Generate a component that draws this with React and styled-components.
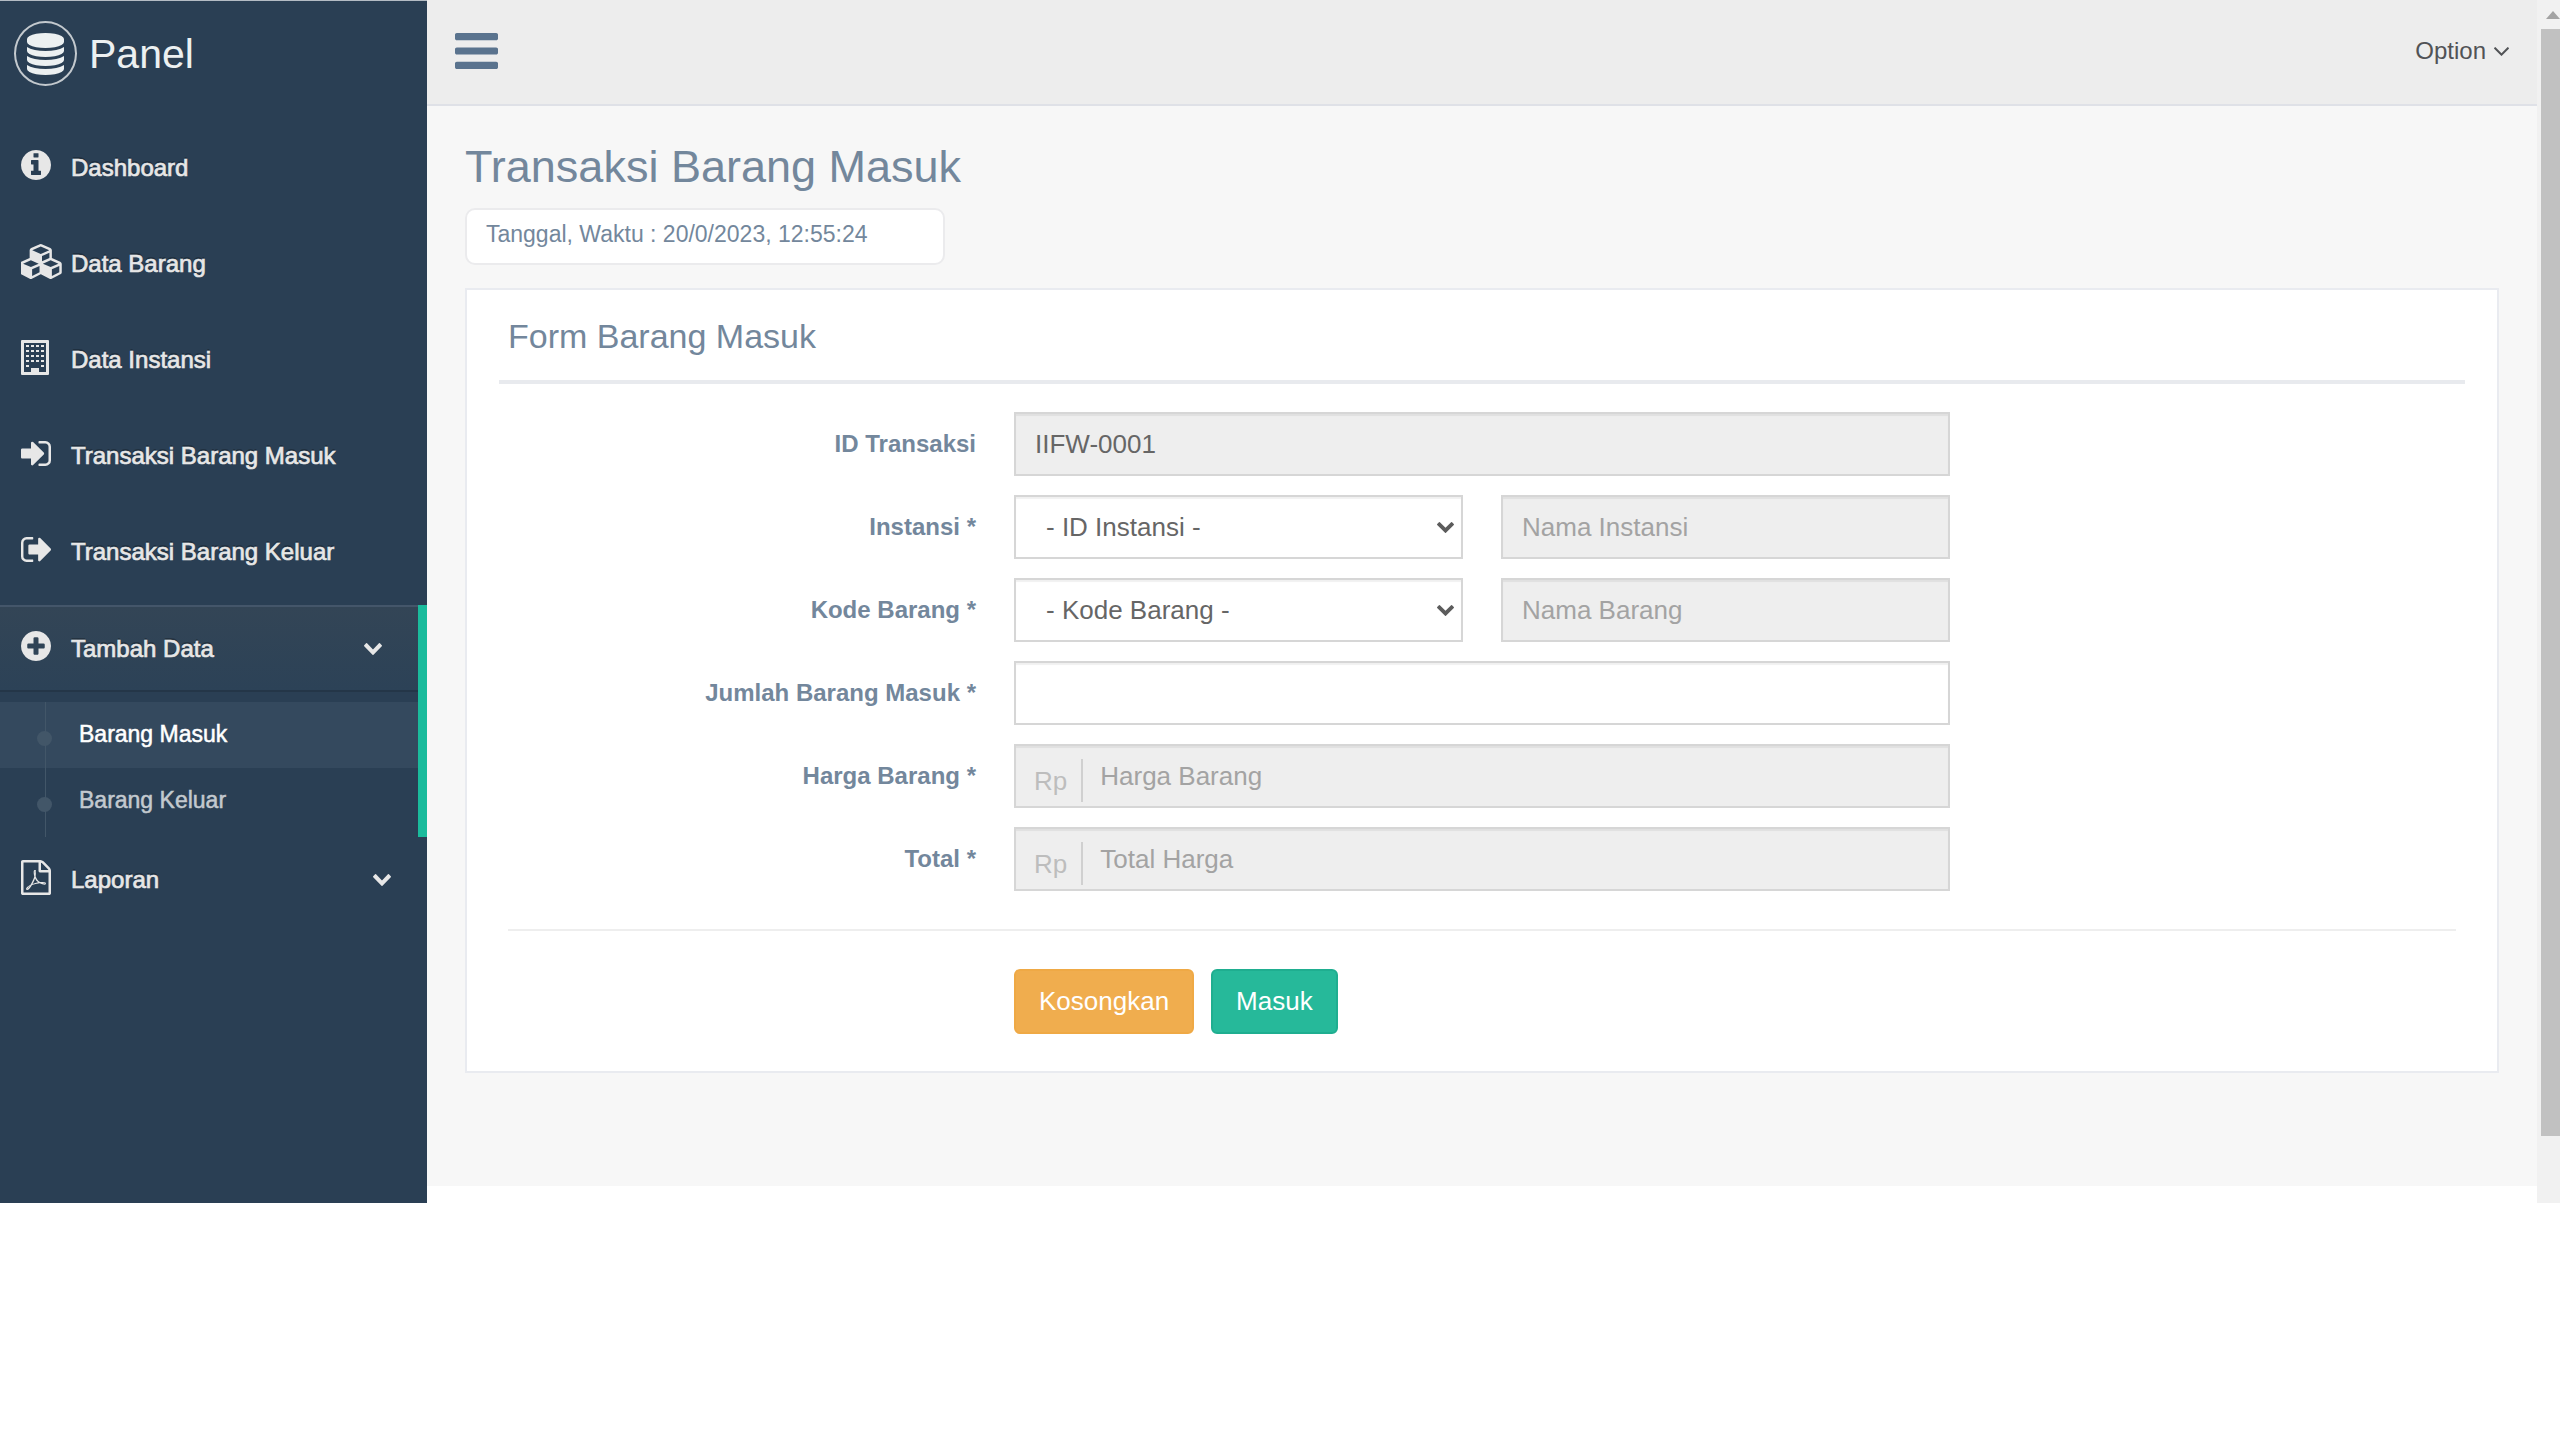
import React from "react";
import styled, { createGlobalStyle } from "styled-components";

const GlobalStyle = createGlobalStyle`
  *, *::before, *::after { box-sizing: border-box; }
  body {
    margin: 0;
    background: #fff;
    color: #73879c;
    font-family: "Liberation Sans", Arial, sans-serif;
    font-size: 24px;
    line-height: 36px;
  }
  button, input, select { font-family: inherit; margin: 0; }
  h1, h2, ul { margin: 0; padding: 0; font-weight: 400; }
  ul { list-style: none; }
  a { color: inherit; text-decoration: none; }
`;

const Svg = styled.svg`
  display: block;
  flex: none;
  width: ${(p) => p.$w}px;
  height: ${(p) => p.$h}px;
  fill: currentColor;
`;

const ICONS = {
  database: {
    box: "128 0 1536 1792",
    d: "M896 768q237 0 443-43t325-127v170q0 69-103 128t-280 93.5-385 34.5-385-34.5-280-93.5-103-128v-170q119 84 325 127t443 43zm0 768q237 0 443-43t325-127v170q0 69-103 128t-280 93.5-385 34.5-385-34.5-280-93.5-103-128v-170q119 84 325 127t443 43zm0-384q237 0 443-43t325-127v170q0 69-103 128t-280 93.5-385 34.5-385-34.5-280-93.5-103-128v-170q119 84 325 127t443 43zm0-1152q208 0 385 34.5t280 93.5 103 128v128q0 69-103 128t-280 93.5-385 34.5-385-34.5-280-93.5-103-128v-128q0-69 103-128t280-93.5 385-34.5z",
  },
  info: {
    box: "128 128 1536 1536",
    d: "M1152 1376v-160q0-14-9-23t-23-9h-96v-512q0-14-9-23t-23-9h-320q-14 0-23 9t-9 23v160q0 14 9 23t23 9h96v320h-96q-14 0-23 9t-9 23v160q0 14 9 23t23 9h448q14 0 23-9t9-23zm-128-896v-160q0-14-9-23t-23-9h-192q-14 0-23 9t-9 23v160q0 14 9 23t23 9h192q14 0 23-9t9-23zm640 416q0 209-103 385.5t-279.5 279.5-385.5 103-385.5-103-279.5-279.5-103-385.5 103-385.5 279.5-279.5 385.5-103 385.5 103 279.5 279.5 103 385.5z",
  },
  cubes: {
    box: "64 0 2176 1792",
    d: "M640 1632l384-192v-314l-384 164v342zm-64-454l404-173-404-173-404 173zm1088 454l384-192v-314l-384 164v342zm-64-454l404-173-404-173-404 173zm-448-293l384-165v-266l-384 164v267zm-64-379l441-189-441-189-441 189zm1088 518v416q0 36-19 67t-52 47l-448 224q-25 14-57 14t-57-14l-448-224q-5-2-7-4-2 2-7 4l-448 224q-25 14-57 14t-57-14l-448-224q-33-16-52-47t-19-67v-416q0-38 21.5-70t56.5-48l434-186v-400q0-38 21.5-70t56.5-48l448-192q23-10 50-10t50 10l448 192q35 16 56.5 48t21.5 70v400l434 186q36 16 57 48t21 70z",
  },
  building: {
    box: "0 0 28 35",
    d: "M1 0H27Q28 0 28 1V34Q28 35 27 35H1Q0 35 0 34V1Q0 0 1 0ZM3 3V32H10V28H18V32H25V3ZM5 5H8V7H5ZM10 5H13V7H10ZM15 5H18V7H15ZM20 5H23V7H20ZM5 10H8V12H5ZM10 10H13V12H10ZM15 10H18V12H15ZM20 10H23V12H20ZM5 15H8V17H5ZM10 15H13V17H10ZM15 15H18V17H15ZM20 15H23V17H20ZM5 20H8V22H5ZM10 20H13V22H10ZM15 20H18V22H15ZM20 20H23V22H20ZM5 25H8V27H5ZM20 25H23V27H20Z",
  },
  signIn: {
    box: "128 256 1536 1280",
    d: "M1312 896q0 26-19 45l-544 544q-19 19-45 19t-45-19-19-45v-288h-448q-26 0-45-19t-19-45v-384q0-26 19-45t45-19h448v-288q0-26 19-45t45-19 45 19l544 544q19 19 19 45zm352-352v704q0 119-84.5 203.5t-203.5 84.5h-320q-13 0-22.5-9.5t-9.5-22.5q0-4-1-20t-.5-26.5 3-23.5 10-19.5 20.5-6.5h320q66 0 113-47t47-113v-704q0-66-47-113t-113-47h-312l-11.5-1-11.5-3-8-5.5-7-9-2-13.5q0-4-1-20t-.5-26.5 3-23.5 10-19.5 20.5-6.5h320q119 0 203.5 84.5t84.5 203.5z",
  },
  signOut: {
    box: "64 256 1568 1280",
    d: "M704 1440q0 4 1 20t.5 26.5-3 23.5-10 19.5-20.5 6.5h-320q-119 0-203.5-84.5t-84.5-203.5v-704q0-119 84.5-203.5t203.5-84.5h320q13 0 22.5 9.5t9.5 22.5q0 4 1 20t.5 26.5-3 23.5-10 19.5-20.5 6.5h-320q-66 0-113 47t-47 113v704q0 66 47 113t113 47h312l11.5 1 11.5 3 8 5.5 7 9 2 13.5zm928-544q0 26-19 45l-544 544q-19 19-45 19t-45-19-19-45v-288h-448q-26 0-45-19t-19-45v-384q0-26 19-45t45-19h448v-288q0-26 19-45t45-19 45 19l544 544q19 19 19 45z",
  },
  plus: {
    box: "128 128 1536 1536",
    d: "M1344 960v-128q0-26-19-45t-45-19h-256v-256q0-26-19-45t-45-19h-128q-26 0-45 19t-19 45v256h-256q-26 0-45 19t-19 45v128q0 26 19 45t45 19h256v256q0 26 19 45t45 19h128q26 0 45-19t19-45v-256h256q26 0 45-19t19-45zm320-64q0 209-103 385.5t-279.5 279.5-385.5 103-385.5-103-279.5-279.5-103-385.5 103-385.5 279.5-279.5 385.5-103 385.5 103 279.5 279.5 103 385.5z",
  },
  pdf: {
    box: "128 0 1536 1792",
    d: "M1596 380q28 28 48 76t20 88v1152q0 40-28 68t-68 28h-1344q-40 0-68-28t-28-68v-1600q0-40 28-68t68-28h896q40 0 88 20t76 48zm-444-244v376h376q-10-29-22-41l-313-313q-12-12-41-22zm384 1528v-1024h-416q-40 0-68-28t-28-68v-416h-768v1536h1280zm-514-593q33 26 84 56 59-7 117-7 147 0 177 49 16 22 2 52 0 1-1 2l-2 2v1q-6 38-71 38-48 0-115-20t-130-53q-221 24-392 83-153 262-242 262-15 0-28-7l-24-12q-1-1-6-5-10-10-6-36 9-40 56-91.5t132-96.5q14-9 23 6 2 2 2 4 52-85 107-197 68-136 104-262-24-82-30.5-159.5t6.5-127.5q11-40 42-40h22q23 0 35 15 18 21 9 68-2 6-4 8 1 3 1 8v30q-2 123-14 192 55 164 146 238zm-576 411q52-24 137-158-51 40-87.5 84t-49.5 74zm398-920q-15 42-2 132 1-7 7-44 0-3 7-43 1-4 4-8-1-1-1-2-1-2-1-3-1-22-13-36 0 1-1 2v2zm-124 661q135-54 284-81-2-1-13-9.5t-16-13.5q-76-67-127-176-27 86-83 197-30 56-45 83zm646-16q-24-24-140-24 76 28 124 28 14 0 18-1 0-1-2-3z",
  },
  bars: {
    box: "128 256 1536 1280",
    d: "M1664 1344v128q0 26-19 45t-45 19h-1408q-26 0-45-19t-19-45v-128q0-26 19-45t45-19h1408q26 0 45 19t19 45zm0-512v128q0 26-19 45t-45 19h-1408q-26 0-45-19t-19-45v-128q0-26 19-45t45-19h1408q26 0 45 19t19 45zm0-512v128q0 26-19 45t-45 19h-1408q-26 0-45-19t-19-45v-128q0-26 19-45t45-19h1408q26 0 45 19t19 45z",
  },
  chevron: {
    box: "90 532 1612 1036",
    d: "M1683 808l-742 741q-19 19-45 19t-45-19l-742-741q-19-19-19-45.5t19-45.5l166-165q19-19 45-19t45 19l531 531 531-531q19-19 45-19t45 19l166 165q19 19 19 45.5t-19 45.5z",
  },
  angle: {
    box: "397 653 998 582",
    d: "M1395 736q0 13-10 23l-466 466q-10 10-23 10t-23-10l-466-466q-10-10-10-23t10-23l50-50q10-10 23-10t23 10l393 393 393-393q10-10 23-10t23 10l50 50q10 10 10 23z",
  },
};

function Icon({ name, w, h }) {
  const { box, d } = ICONS[name];
  return (
    <Svg viewBox={box} $w={w} $h={h} preserveAspectRatio="none" aria-hidden="true">
      <path d={d} fillRule={name === "building" ? "evenodd" : "nonzero"} />
    </Svg>
  );
}

const Shell = styled.div`
  display: flex;
  align-items: stretch;
`;

/* Sidebar */
const Sidebar = styled.aside`
  flex: none;
  width: 427px;
  background: #2a3f54;
  border-top: 1px solid #b4bcc4;
`;

const Brand = styled.a`
  display: flex;
  align-items: center;
  gap: 12px;
  height: 105px;
  padding: 0 14px;
  color: #ecf0f1;
  font-size: 41px;
  line-height: 60px;
`;

const BrandMark = styled.span`
  display: flex;
  align-items: center;
  justify-content: center;
  width: 63px;
  height: 65px;
  border: 2px solid #c3c9ce;
  border-radius: 50%;
`;

const Menu = styled.ul`
  padding-top: 19px;
`;

const MenuItem = styled.li`
  margin-bottom: ${(p) => (p.$open ? 0 : 11)}px;
  border-right: ${(p) => (p.$open ? "9px solid #1abb9c" : "0")};
`;

const MenuLink = styled.a`
  display: flex;
  align-items: center;
  height: ${(p) => (p.$open ? 87 : 85)}px;
  padding: 0 36px 0 21px;
  color: #e7e7e7;
  font-weight: 400;
  -webkit-text-stroke: 0.7px currentColor;
  text-shadow: 0 -2px 0 rgba(0, 0, 0, 0.25);
  background: ${(p) => (p.$open ? "linear-gradient(#334556, #2c4257)" : "none")};
  border-top: ${(p) => (p.$open ? "2px solid #44566a" : "0")};
  border-bottom: ${(p) => (p.$open ? "2px solid #243648" : "0")};
`;

const MenuIcon = styled.span`
  flex: none;
  width: 50px;
  padding-bottom: 5px;
`;

const MenuText = styled.span`
  flex: 1;
`;

const SubMenu = styled.ul`
  position: relative;
  margin-top: 10px;
  padding-bottom: 3px;
  &::after {
    content: "";
    position: absolute;
    left: 45px;
    top: 0;
    bottom: 0;
    border-left: 1px solid #425668;
  }
`;

const SubItem = styled.li`
  position: relative;
  background: ${(p) => (p.$current ? "#34495e" : "none")};
  &::before {
    content: "";
    position: absolute;
    left: 37px;
    top: 29px;
    width: 15px;
    height: 15px;
    border-radius: 50%;
    background: #425668;
  }
`;

const SubLink = styled.a`
  display: block;
  padding: 14px 16px 16px 79px;
  color: ${(p) => (p.$current ? "#fff" : "#c3c9cf")};
  font-size: 23px;
  -webkit-text-stroke: 0.5px currentColor;
`;

/* Main column */
const Main = styled.div`
  flex: 1;
  min-width: 0;
  padding-bottom: 17px;
`;

const TopBar = styled.header`
  display: flex;
  align-items: center;
  justify-content: space-between;
  height: 106px;
  padding: 0 28px 2px;
  background: #ededed;
  border-bottom: 2px solid #dfe1e7;
`;

const PlainButton = styled.button`
  display: flex;
  align-items: center;
  gap: 8px;
  padding: 0;
  border: 0;
  background: none;
  color: ${(p) => p.$color};
  font-size: 24px;
  line-height: 36px;
`;

const Content = styled.main`
  padding: 33px 38px 113px;
  background: #f7f7f7;
`;

const PageTitle = styled.h1`
  font-size: 45px;
  line-height: 56px;
`;

const Clock = styled.div`
  width: 480px;
  max-width: 100%;
  margin: 13px 0 23px;
  padding: 6px 19px 11px;
  background: #fff;
  border: 2px solid #ebebed;
  border-radius: 10px;
  font-size: 23px;
`;

const Card = styled.section`
  padding: 20px 41px 37px;
  background: #fff;
  border: 2px solid #e9ebf0;
`;

const CardTitle = styled.h2`
  margin: 0 -9px 28px;
  padding: 4px 9px 22px;
  border-bottom: 4px solid #e8eaee;
  font-size: 34px;
  line-height: 44px;
`;

const Form = styled.form`
  display: flex;
  flex-direction: column;
  gap: 19px;
`;

const Row = styled.div`
  display: grid;
  grid-template-columns: 1fr 2fr 1fr;
`;

const Label = styled.label`
  padding: 14px 19px;
  text-align: right;
  font-weight: 700;
`;

const Fields = styled.div`
  grid-column: 2;
  display: grid;
  grid-template-columns: repeat(${(p) => p.$cols || 1}, minmax(0, 1fr));
  gap: 38px;
  padding: 0 19px;
`;

const Input = styled.input`
  width: 100%;
  height: 64px;
  padding: 0 19px;
  border: 2px solid #d6d6d6;
  border-radius: 0;
  box-shadow: inset 0 2px 1px rgba(0, 0, 0, 0.06);
  background: ${(p) => (p.readOnly ? "#eee" : "#fff")};
  color: #666;
  font-size: 26px;
  outline: 0;
  &::placeholder { color: #a3a3a3; opacity: 1; }
`;

const Prefixed = styled.div`
  display: flex;
  align-items: flex-end;
  height: 64px;
  border: 2px solid #d6d6d6;
  box-shadow: inset 0 2px 1px rgba(0, 0, 0, 0.06);
  background: #eee;
`;

const Prefix = styled.span`
  flex: none;
  margin-bottom: 4px;
  padding: 4px 14px 3px 18px;
  border-right: 2px solid #d0d0d0;
  color: #bdbdbd;
  font-size: 26px;
`;

const PrefixedInput = styled(Input)`
  height: 60px;
  padding: 0 17px;
  border: 0;
  box-shadow: none;
  background: transparent;
`;

const SelectBox = styled.div`
  position: relative;
`;

const Select = styled.select`
  appearance: none;
  width: 100%;
  height: 64px;
  padding: 0 48px 0 30px;
  border: 2px solid #d6d6d6;
  border-radius: 0;
  box-shadow: inset 0 2px 1px rgba(0, 0, 0, 0.06);
  background: #fff;
  color: #666;
  font-size: 26px;
`;

const SelectArrow = styled.span`
  position: absolute;
  right: 9px;
  top: 27px;
  color: #5c5c5c;
  pointer-events: none;
`;

const Divider = styled.hr`
  width: 100%;
  height: 2px;
  margin: 19px 0;
  border: 0;
  background: #eee;
`;

const Actions = styled.div`
  grid-column: 2;
  display: flex;
  gap: 17px;
  padding: 0 19px;
`;

const Button = styled.button`
  height: 65px;
  padding: 0 23px;
  border: 2px solid ${(p) => (p.$primary ? "#1fae90" : "#efa945")};
  border-radius: 6px;
  background: ${(p) => (p.$primary ? "#26b99a" : "#f0ad4e")};
  color: #fff;
  font-size: 26px;
`;

/* Scroll rail */
const Rail = styled.div`
  flex: none;
  display: flex;
  flex-direction: column;
  align-items: flex-end;
  width: 23px;
  background: #f1f1f1;
`;

const RailArrow = styled.span`
  display: flex;
  align-items: center;
  height: 29px;
  color: #a3a3a3;
`;

const RailThumb = styled.div`
  width: 19px;
  height: 92%;
  background: #c1c1c1;
`;

const NAV = [
  { icon: "info", w: 30, h: 30, text: "Dashboard" },
  { icon: "cubes", w: 42, h: 35, text: "Data Barang" },
  { icon: "building", w: 28, h: 35, text: "Data Instansi" },
  { icon: "signIn", w: 30, h: 25, text: "Transaksi Barang Masuk" },
  { icon: "signOut", w: 30, h: 25, text: "Transaksi Barang Keluar" },
  { icon: "plus", w: 30, h: 30, text: "Tambah Data", children: ["Barang Masuk", "Barang Keluar"] },
  { icon: "pdf", w: 30, h: 35, text: "Laporan", more: true },
];

function NavEntry({ item }) {
  const open = Boolean(item.children);
  return (
    <MenuItem $open={open}>
      <MenuLink href="#" $open={open}>
        <MenuIcon>
          <Icon name={item.icon} w={item.w} h={item.h} />
        </MenuIcon>
        <MenuText>{item.text}</MenuText>
        {(open || item.more) && <Icon name="chevron" w={18} h={12} />}
      </MenuLink>
      {open && (
        <SubMenu>
          {item.children.map((text, i) => (
            <SubItem key={text} $current={i === 0}>
              <SubLink href="#" $current={i === 0}>{text}</SubLink>
            </SubItem>
          ))}
        </SubMenu>
      )}
    </MenuItem>
  );
}

function FormRow({ id, label, required, cols, children }) {
  return (
    <Row>
      <Label htmlFor={id}>
        {label}
        {required && " *"}
      </Label>
      <Fields $cols={cols}>{children}</Fields>
    </Row>
  );
}

function Picker({ id, text }) {
  return (
    <SelectBox>
      <Select id={id} defaultValue="">
        <option value="">{text}</option>
      </Select>
      <SelectArrow>
        <Icon name="chevron" w={17} h={11} />
      </SelectArrow>
    </SelectBox>
  );
}

function MoneyField({ id, placeholder }) {
  return (
    <Prefixed>
      <Prefix>Rp</Prefix>
      <PrefixedInput id={id} placeholder={placeholder} readOnly />
    </Prefixed>
  );
}

export default function App() {
  return (
    <>
      <GlobalStyle />
      <Shell>
        <Sidebar>
          <Brand href="#">
            <BrandMark>
              <Icon name="database" w={37} h={42} />
            </BrandMark>
            Panel
          </Brand>
          <nav>
            <Menu>
              {NAV.map((item) => (
                <NavEntry key={item.text} item={item} />
              ))}
            </Menu>
          </nav>
        </Sidebar>

        <Main>
          <TopBar>
            <PlainButton type="button" $color="#5a738e" aria-label="Menu">
              <Icon name="bars" w={43} h={36} />
            </PlainButton>
            <PlainButton type="button" $color="#515356">
              Option
              <Icon name="angle" w={15} h={9} />
            </PlainButton>
          </TopBar>

          <Content>
            <PageTitle>Transaksi Barang Masuk</PageTitle>
            <Clock>Tanggal, Waktu : 20/0/2023, 12:55:24</Clock>

            <Card>
              <CardTitle>Form Barang Masuk</CardTitle>
              <Form>
                <FormRow id="id-transaksi" label="ID Transaksi">
                  <Input id="id-transaksi" defaultValue="IIFW-0001" readOnly />
                </FormRow>
                <FormRow id="instansi" label="Instansi" required cols={2}>
                  <Picker id="instansi" text="- ID Instansi -" />
                  <Input placeholder="Nama Instansi" aria-label="Nama Instansi" readOnly />
                </FormRow>
                <FormRow id="kode-barang" label="Kode Barang" required cols={2}>
                  <Picker id="kode-barang" text="- Kode Barang -" />
                  <Input placeholder="Nama Barang" aria-label="Nama Barang" readOnly />
                </FormRow>
                <FormRow id="jumlah" label="Jumlah Barang Masuk" required>
                  <Input id="jumlah" />
                </FormRow>
                <FormRow id="harga" label="Harga Barang" required>
                  <MoneyField id="harga" placeholder="Harga Barang" />
                </FormRow>
                <FormRow id="total" label="Total" required>
                  <MoneyField id="total" placeholder="Total Harga" />
                </FormRow>
                <Divider />
                <Row>
                  <Actions>
                    <Button type="reset">Kosongkan</Button>
                    <Button type="button" $primary>Masuk</Button>
                  </Actions>
                </Row>
              </Form>
            </Card>
          </Content>
        </Main>

        <Rail aria-hidden="true">
          <RailArrow>
            <Svg viewBox="0 0 14 8" $w={14} $h={8}>
              <path d="M7 0L14 8H0Z" />
            </Svg>
          </RailArrow>
          <RailThumb />
        </Rail>
      </Shell>
    </>
  );
}
